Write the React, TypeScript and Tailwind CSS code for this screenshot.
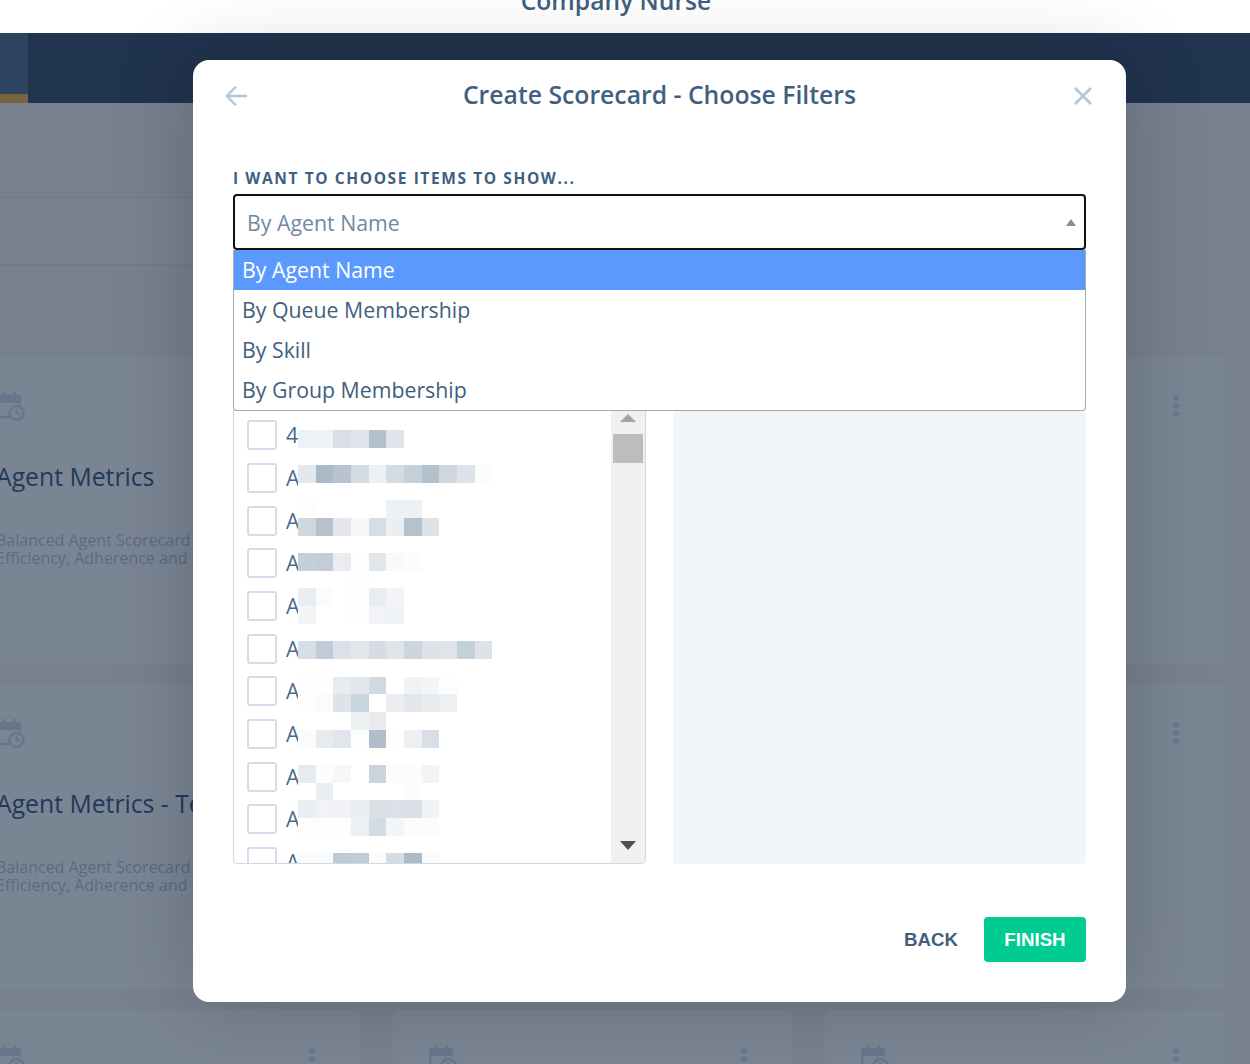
import React from 'react';

const cards = [
  { title: 'Agent Metrics', lines: ['Balanced Agent Scorecard focused on', 'Efficiency, Adherence and Quality'] },
  { title: '', lines: [] },
  { title: '', lines: [] },
  { title: 'Agent Metrics - Team', lines: ['Balanced Agent Scorecard focused on', 'Efficiency, Adherence and Quality'] },
  { title: '', lines: [] },
  { title: '', lines: [] },
  { title: '', lines: [] },
  { title: '', lines: [] },
  { title: '', lines: [] },
];

const options = ['By Agent Name', 'By Queue Membership', 'By Skill', 'By Group Membership'];

const agents = ['4', 'A', 'A', 'A', 'A', 'A', 'A', 'A', 'A', 'A', 'A'];

// redacted names: y is measured from the top of the list box, colours run left to right
const mosaic: { y: number; cells: string[] }[] = [
  { y: 19, cells: ['#eef1f5', '#f0f2f5', '#d8dfe6', '#e0e5ec', '#b3c0cc', '#dfe4eb'] },
  { y: 54, cells: ['#e3e8ed', '#a9b9c8', '#b7c4cf', '#d3dbe2', '#edf0f3', '#d4dce3', '#c5d0da', '#b3c1cd', '#cfd8df', '#dee3ea', '#fbfcfc'] },
  { y: 89, cells: ['#fdfdfd', '#ffffff', '#ffffff', '#ffffff', '#ffffff', '#eef1f4', '#eef1f4'] },
  { y: 107, cells: ['#d0d8df', '#b5c2cd', '#e4e8ed', '#f5f7f8', '#d6dde5', '#ebeff2', '#b5c2ce', '#dee3ea'] },
  { y: 142, cells: ['#c3cfd9', '#c3cdd7', '#e9edf2', '#fdfdfe', '#e1e6ea', '#f8f9fa', '#fbfcfc'] },
  { y: 160, cells: ['#ffffff', '#ffffff', '#ffffff', '#fcfdfc'] },
  { y: 177, cells: ['#e9edf0', '#fafbfc', '#ffffff', '#fcfdfc', '#e9ecf0', '#f3f4f5'] },
  { y: 195, cells: ['#f3f5f7', '#ffffff', '#ffffff', '#fdfdfd', '#f1f3f7', '#f0f3f6'] },
  { y: 230, cells: ['#d6dde5', '#bfcbd6', '#dbe1e8', '#e3e7eb', '#d5dce4', '#dfe4ea', '#cdd5de', '#dce2e8', '#dfe4ea', '#c4d0da', '#dde2e9'] },
  { y: 266, cells: ['#fdfdfd', '#fefefe', '#e8ebef', '#e3e7eb', '#d2d9e1', '#ffffff', '#f0f3f6', '#f3f5f7', '#fdfdfd'] },
  { y: 283, cells: ['#fdfdfd', '#fafbfb', '#dde3e9', '#c9d4dd', '#ffffff', '#ebeef1', '#e3e7eb', '#e9ecef', '#ecf0f2'] },
  { y: 301, cells: ['#ffffff', '#ffffff', '#ffffff', '#eef1f4', '#e9ebef'] },
  { y: 319, cells: ['#fafbfc', '#e7ebef', '#e1e6ed', '#fcfdfd', '#b0bdca', '#fcfdfc', '#ecf0f3', '#d8dfe6'] },
  { y: 354, cells: ['#e7ebef', '#fbfcfd', '#f6f7f8', '#ffffff', '#cbd3dc', '#fcfcfc', '#fcfcfd', '#f1f4f7'] },
  { y: 372, cells: ['#ffffff', '#ebeef1', '#ffffff', '#ffffff', '#ffffff', '#ffffff', '#fbfcfb'] },
  { y: 389, cells: ['#ebeef3', '#f2f3f6', '#f0f2f5', '#ebeef1', '#dae0e6', '#dce1e8', '#dbe0e7', '#f0f3f6'] },
  { y: 407, cells: ['#fdfdfd', '#fdfdfd', '#fdfdfd', '#edf0f2', '#d3dbe3', '#f3f5f6', '#fbfcfc', '#fbfcfc'] },
  { y: 442, cells: ['#f9fafc', '#f9fafc', '#bccad4', '#bfcbd5', '#fafbfc', '#d5dde4', '#adbac7', '#f9fafc'] },
];

const CalendarClockIcon = () => (
  <svg width="28" height="30" viewBox="0 0 28 30" fill="none" className="-ml-[1px] text-[#68758b]">
    <path d="M5 0h3v3h8V0h3v3h3a2 2 0 0 1 2 2v6H0V5a2 2 0 0 1 2-2h3z" fill="currentColor" />
    <path d="M1.2 10v13a2 2 0 0 0 2 2H13" stroke="currentColor" strokeWidth="2.4" />
    <path d="M22.8 10v2" stroke="currentColor" strokeWidth="2.4" />
    <circle cx="19.5" cy="21" r="7" stroke="currentColor" strokeWidth="2.6" />
    <path d="M19.5 17v4.5h3.5" stroke="currentColor" strokeWidth="1.8" />
  </svg>
);

const App: React.FC = () => {
  return (
    <div className="relative h-[1064px] w-[1250px] overflow-hidden bg-[#76808f] font-['Open_Sans',sans-serif]">
      <header className="flex h-[33px] justify-center overflow-hidden bg-white">
        <span className="-mt-[13px] -ml-[18px] text-[24.6px] leading-[28px] font-semibold text-[#3f5f80]">Company Nurse</span>
      </header>

      <nav className="flex h-[70px] bg-[#21344e]">
        <div className="flex w-[28px] flex-col justify-between bg-[#2c4460]">
          <span className="-ml-[7px] mt-6 text-[14px] leading-[18px] text-[#8594a8]">s</span>
          <div className="h-[9px] bg-[#7b6340]" />
        </div>
      </nav>

      <main>
        <div className="mt-[94px] h-[68px] w-[700px] border-y border-[#6e7a8b] bg-[#78838f]" />
        <div className="mt-[92px] ml-[-39px] grid w-[1264px] grid-cols-3 gap-x-8 gap-y-5">
          {cards.map((card, i) => (
            <div key={i} className="relative h-[306.5px] rounded-md bg-[#7a8594] pt-[35px] pl-[37px]">
              <CalendarClockIcon />
              <div className="mt-[39px] -ml-[2px] whitespace-nowrap text-[24.75px] leading-[32px] text-[#22395a]">{card.title}</div>
              <div className="mt-[38px] -ml-[2px] whitespace-nowrap text-[16px] leading-[18px] text-[#5c6a81]">
                {card.lines.map((line) => (
                  <div key={line}>{line}</div>
                ))}
              </div>
              <div className="absolute top-[38px] right-[46px] flex flex-col gap-[2px]">
                <span className="h-[6px] w-[6px] rounded-full bg-[#68768c]" />
                <span className="h-[6px] w-[6px] rounded-full bg-[#68768c]" />
                <span className="h-[6px] w-[6px] rounded-full bg-[#68768c]" />
              </div>
            </div>
          ))}
        </div>
      </main>

      {/* modal */}
      <div className="absolute top-[60px] left-[193px] h-[942px] w-[933px] rounded-2xl bg-white px-10 shadow-[0_0_80px_rgba(0,0,0,0.2)]">
        <div className="relative flex h-[70px] items-center justify-center">
          <h1 className="text-[24.75px] leading-[32px] font-semibold text-[#3f5f80]">Create Scorecard - Choose Filters</h1>
          <svg className="absolute top-[25px] -left-[8px]" width="22" height="22" viewBox="0 0 22 22" fill="none" stroke="#b6c5d5" strokeWidth="2.4">
            <path d="M22 11H2M11 1.5L1.8 11l9.2 9.5" />
          </svg>
          <svg className="absolute top-[27px] right-[-6px]" width="18" height="18" viewBox="0 0 18 18" fill="none" stroke="#b6c5d5" strokeWidth="2.6">
            <path d="M1 1l16 16M17 1L1 17" />
          </svg>
        </div>

        <label className="mt-[38px] block text-[15.5px] leading-[20px] font-bold tracking-[1.6px] text-[#3f5f80]">
          I WANT TO CHOOSE ITEMS TO SHOW...
        </label>
        <div className="relative mt-[6px]">
          <div className="relative flex h-[56px] items-center rounded-[4px] border-2 border-[#111111] bg-white pt-[2px] pl-[12px] text-[21.3px] text-[#7189a4]">
            By Agent Name
            <span className="absolute top-[23px] right-[8px] h-0 w-0 border-x-[5px] border-b-[7px] border-x-transparent border-b-[#8c8c8c]" />
          </div>
          <div className="absolute top-[56px] left-0 z-10 w-full overflow-hidden rounded-b-[4px] border-x border-b border-[#a9a9a9] bg-white">
            {options.map((option, i) => (
              <div
                key={option}
                className={
                  i === 0
                    ? 'h-[40px] bg-[#5b99fe] px-2 text-[21.3px] leading-[39px] text-white'
                    : 'h-[40px] px-2 text-[21.3px] leading-[39px] text-[#3f5f80]'
                }
              >
                {option}
              </div>
            ))}
          </div>
        </div>

        <div className="mt-[160px] flex gap-[27px]">
          <div className="relative flex h-[454px] w-[413px] overflow-hidden rounded-b-[4px] border border-[#d0d8e3]">
            <div className="flex-1 pt-[3px] pl-[13px]">
              {agents.map((agent, i) => (
                <div key={i} className="flex h-[42.67px] items-center">
                  <span className="h-[30px] w-[30px] shrink-0 rounded-[3px] border-2 border-[#d3dce8] bg-white" />
                  <span className="ml-[9px] w-[12px] overflow-hidden text-[21.3px] leading-[30px] text-[#486a8c]">{agent}</span>
                </div>
              ))}
            </div>

            <div className="relative w-[34px] shrink-0 bg-[#f0f0f0]">
              <span className="absolute top-[3px] left-[9px] h-0 w-0 border-x-[8px] border-b-[8px] border-x-transparent border-b-[#a3a3a3]" />
              <div className="absolute top-[23px] left-[2px] h-[29px] w-[30px] bg-[#bdbdbd]" />
              <span className="absolute bottom-[13px] left-[9px] h-0 w-0 border-x-[8px] border-t-[9px] border-x-transparent border-t-[#505050]" />
            </div>

            {mosaic.map((band) => (
              <div key={band.y} className="absolute left-[64px] flex" style={{ top: band.y }}>
                {band.cells.map((color, i) => (
                  <span key={i} className="h-[18px] w-[17.67px]" style={{ backgroundColor: color }} />
                ))}
              </div>
            ))}
          </div>

          <div className="h-[454px] w-[413px] rounded-b-[4px] bg-[#f2f5fa]" />
        </div>

        <div className="mt-[53px] flex items-center justify-end gap-[26px] font-['Liberation_Sans',sans-serif] text-[18.7px] font-bold">
          <button className="pt-[2px] text-[#3f5f80]">BACK</button>
          <button className="h-[45px] w-[102px] rounded-[4px] bg-[#00cc92] pt-[2px] text-white">FINISH</button>
        </div>
      </div>
    </div>
  );
};

export default App;
